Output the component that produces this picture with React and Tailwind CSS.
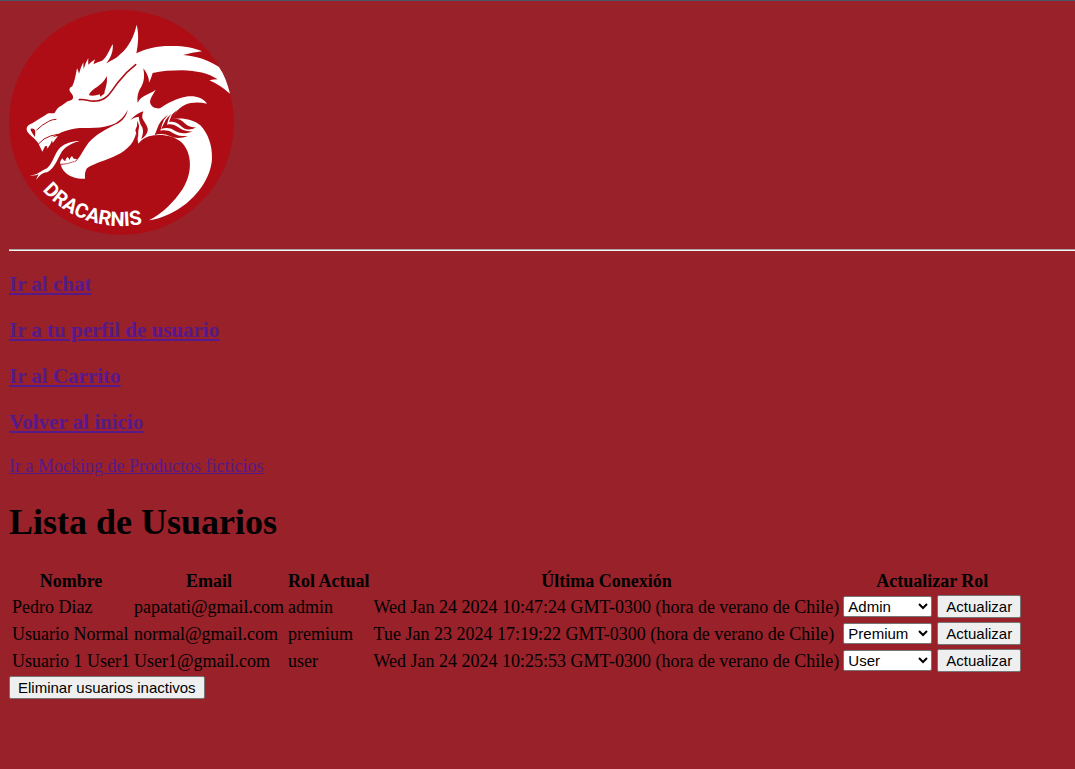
import React from "react";

const links = ["Ir al chat", "Ir a tu perfil de usuario", "Ir al Carrito", "Volver al inicio"];

const users = [
  { name: "Pedro Diaz", email: "papatati@gmail.com", role: "admin", last: "Wed Jan 24 2024 10:47:24 GMT-0300 (hora de verano de Chile)" },
  { name: "Usuario Normal", email: "normal@gmail.com", role: "premium", last: "Tue Jan 23 2024 17:19:22 GMT-0300 (hora de verano de Chile)" },
  { name: "Usuario 1 User1", email: "User1@gmail.com", role: "user", last: "Wed Jan 24 2024 10:25:53 GMT-0300 (hora de verano de Chile)" },
];

const buttonClass =
  "rounded-[2px] border border-[#767676] bg-[#efefef] px-2 font-['Liberation_Sans',Arial,sans-serif] text-[15px] leading-[21px] text-black";

function Logo() {
  return (
    <svg viewBox="27 30 675 675" className="block size-[225px]" role="img" aria-label="Dracarnis">
      <defs>
        <path id="name-arc" d="M127 570A311 311 0 0 0 470 659" />
      </defs>
      <circle cx="364.500" cy="367.500" r="337.500" fill="#ae0d16" />
      <path
        fill="#fff"
        d="M80 388C80 378 87 374 97 370C112 359 130 350 142 341C148 338 156 341 164 339C170 326 176 321 184 317L203 304C210 301 217 301 219 295C221 287 216 282 211 276C206 269 209 262 217 259C224 244 227 225 231 205Q235 212 237 221Q242 203 250 187Q250 197 251 207Q256 189 265 174Q264 184 265 194Q274 185 286 178Q281 186 281 193C290 187 298 185 305 183C321 172 327 152 338 132C341 152 332 174 319 190C336 179 350 175 362 161C386 142 402 109 410 74C417 101 415 132 409 160C436 146 471 138 510 138C544 137 579 141 606 154Q577 157 549 165C585 168 625 179 657 201C673 224 683 252 690 281Q660 255 628 241Q640 238 653 238C625 220 590 212 545 211C514 211 483 213 458 219Q454 234 447 248Q447 235 443 227Q438 215 430 205C434 227 433 244 424 260C413 276 411 292 413 308C425 284 448 284 467 269C461 282 451 292 450 306C453 322 467 326 480 325C502 309 530 295 557 290C583 286 607 291 621 311C604 307 588 306 572 309C546 314 529 330 516 357C549 352 580 358 601 376C625 401 637 438 636 475C634 526 601 577 558 611C525 637 486 655 447 661C488 641 523 604 548 567C580 515 575 458 546 428C519 405 480 401 447 409Q428 415 415 431L409 397C402 436 371 458 337 472C307 485 276 493 261 505Q253 516 255 536C225 540 187 523 182 493L225 486C242 472 249 450 265 429C286 404 320 387 348 373C367 364 380 348 383 329C372 352 356 367 333 375C300 387 268 383 239 384C204 387 179 398 158 411Q140 425 121 441Q115 427 102 415C93 407 80 398 80 388Z"
      />
      <path fill="#fff" d="M119 438L127 455L135 439L141 438L142 446Q153 434 156 421L158 429L174 408Q145 411 119 438Z" />
      <path fill="#fff" d="M180 491Q180 482 187 475Q190 481 196 484Q196 477 202 471Q207 474 209 480Q210 472 216 468L221 476L231 477L218 491Z" />
      <path fill="#fff" d="M89 526C112 527 123 512 141 505C161 487 161 463 180 443C195 430 216 423 239 423C209 431 191 444 182 461C171 480 163 505 141 517C125 518 121 527 108 539Q112 531 116 523Q106 528 89 526Z" />
      <path fill="#ae0d16" d="M267 286C272 265 306 261 320 228C324 251 314 268 313 281Q306 286 301 290L299 283Q283 289 267 286Z" />
      <path fill="#ae0d16" d="M92 386Q105 384 106 395L105 411Q98 403 92 391Z" />
      <g fill="none" stroke="#ae0d16" strokeLinecap="round">
        <path strokeWidth="5" d="M238 299C257 296 265 305 288 303C323 303 337 267 355 246Q378 216 407 194" />
        <path strokeWidth="3" d="M110 390Q126 374 146 364Q156 358 168 358" />
        <path strokeWidth="3" d="M114 433Q132 413 151 408L173 403" />
        <path strokeWidth="2" d="M184 494Q203 492 221 485" />
      </g>
      <g fill="#ae0d16">
        <path d="M391 360Q407 342 430 334Q426 344 427 354C434 370 448 382 442 396Q438 408 424 417C428 404 432 394 426 380C417 367 418 356 416 350Q403 351 391 360Z" />
        <path d="M412 363Q420 376 415 392L414 419L406 390Q413 378 412 363Z" />
        <path d="M504 344Q484 358 476 375L464 405C480 400 496 401 509 408C525 416 545 415 564 408C545 409 531 407 517 398C506 391 494 390 481 392L486 374Q490 358 504 344Z" />
        <path d="M514 342Q497 356 494 366L483 387C500 382 511 384 522 391C539 402 558 403 577 394C560 395 546 391 535 382C524 374 512 371 501 374L504 362Q507 350 514 342Z" />
        <path d="M536 328Q517 340 513 350L507 366C522 364 531 368 540 376C554 390 569 393 589 382C574 383 563 379 554 370C544 359 532 355 518 357L522 347Q527 336 536 328Z" />
      </g>
      <text fill="#fff" fontSize="60" fontWeight="700" fontFamily="Roboto, 'Liberation Sans', sans-serif">
        <textPath href="#name-arc">DRACARNIS</textPath>
      </text>
    </svg>
  );
}

export default function App() {
  return (
    <div className="min-h-screen border-t border-[#4a5566] bg-[#98212a] pl-[9px] font-['Liberation_Serif','Times_New_Roman',serif] text-[18px] leading-[20px] text-black">
      <header className="pt-[9px]">
        <Logo />
        <hr className="mt-[14px] border-t border-b border-t-[#a8a8a8] border-b-[#f4f4f4]" />
      </header>
      <nav className="flex flex-col items-start gap-[22px] pt-[21px] text-[#551a8b]">
        {links.map((label) => (
          <h3 key={label} className="text-[21px] leading-[24px] font-bold">
            <a href="#" className="underline">{label}</a>
          </h3>
        ))}
        <a href="#" className="underline">Ir a Mocking de Productos ficticios</a>
      </nav>
      <main className="flex flex-col items-start pt-[26px]">
        <h1 className="text-[36px] leading-[40px] font-bold">Lista de Usuarios</h1>
        <table className="mt-[26px] mb-px border-separate border-spacing-[2px] whitespace-nowrap">
          <thead>
            <tr>
              {["Nombre", "Email", "Rol Actual", "Última Conexión", "Actualizar Rol"].map((title) => (
                <th key={title} scope="col" className="p-px text-center font-bold">{title}</th>
              ))}
            </tr>
          </thead>
          <tbody>
            {users.map((user) => (
              <tr key={user.email}>
                <td className="p-px">{user.name}</td>
                <td className="p-px">{user.email}</td>
                <td className="p-px">{user.role}</td>
                <td className="p-px">{user.last}</td>
                <td className="p-px">
                  <form className="flex items-center gap-[5px]" onSubmit={(event) => event.preventDefault()}>
                    <select
                      aria-label={"Rol de " + user.name}
                      defaultValue={user.role}
                      className="h-[21px] w-[89px] rounded-[2px] border border-[#767676] bg-white font-['Liberation_Sans',Arial,sans-serif] text-[15px] leading-[19px] text-black"
                    >
                      <option value="admin">Admin</option>
                      <option value="premium">Premium</option>
                      <option value="user">User</option>
                    </select>
                    <button type="submit" className={buttonClass}>Actualizar</button>
                  </form>
                </td>
              </tr>
            ))}
          </tbody>
        </table>
        <button type="button" className={buttonClass}>Eliminar usuarios inactivos</button>
      </main>
    </div>
  );
}
